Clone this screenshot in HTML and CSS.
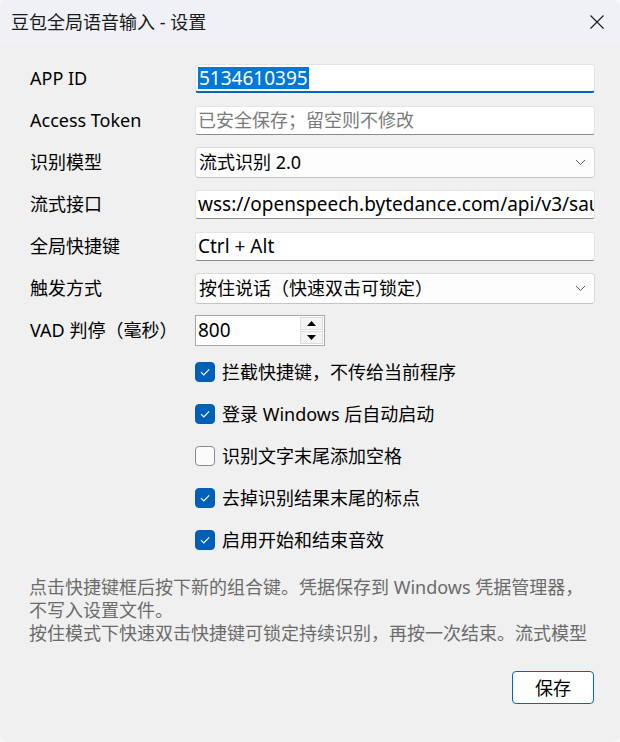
FILE: index.html
```html
<!DOCTYPE html>
<html lang="zh-CN">
<head>
<meta charset="utf-8">
<title>豆包全局语音输入 - 设置</title>
<link rel="stylesheet" href="styles.css">
</head>
<body>
<div class="window">
  <header class="titlebar">
    <span class="title">豆包全局语音输入 - 设置</span>
    <button class="close" aria-label="关闭">
      <svg width="16" height="16" viewBox="0 0 16 16"><path d="M1.5 1.5 L14.5 14.5 M14.5 1.5 L1.5 14.5" stroke="#1a1a1a" stroke-width="1.1" fill="none"/></svg>
    </button>
  </header>

  <main class="form">
    <label class="label">APP ID</label>
    <div class="field focused"><span class="selected latin">5134610395</span></div>

    <label class="label">Access Token</label>
    <div class="field"><span class="placeholder">已安全保存；留空则不修改</span></div>

    <label class="label">识别模型</label>
    <div class="select"><span>流式识别 2.0</span>
      <svg class="chev" width="11" height="7" viewBox="0 0 11 7"><path d="M1 1 L5.5 5.5 L10 1" stroke="#5c5c5c" stroke-width="1" fill="none"/></svg>
    </div>

    <label class="label">流式接口</label>
    <div class="field"><span class="latin">wss://openspeech.bytedance.com/api/v3/sauc/bigmodel_async</span></div>

    <label class="label">全局快捷键</label>
    <div class="field"><span class="latin">Ctrl + Alt</span></div>

    <label class="label">触发方式</label>
    <div class="select"><span>按住说话（快速双击可锁定）</span>
      <svg class="chev" width="11" height="7" viewBox="0 0 11 7"><path d="M1 1 L5.5 5.5 L10 1" stroke="#5c5c5c" stroke-width="1" fill="none"/></svg>
    </div>

    <label class="label">VAD 判停（毫秒）</label>
    <div class="spin-row">
      <div class="spin">
        <span class="spin-value latin">800</span>
        <div class="spin-buttons">
          <span class="spin-btn"><svg width="9" height="5" viewBox="0 0 9 5"><path d="M4.5 0 L9 5 L0 5 Z" fill="#000"/></svg></span>
          <span class="spin-btn"><svg width="9" height="5" viewBox="0 0 9 5"><path d="M0 0 L9 0 L4.5 5 Z" fill="#000"/></svg></span>
        </div>
      </div>
    </div>

    <div class="check checked">
      <span class="box"><svg width="20" height="20" viewBox="0 0 20 20"><path d="M6 10.2 L8.8 13 L14.2 7.4" stroke="#fff" stroke-width="1.2" fill="none"/></svg></span>
      <span>拦截快捷键，不传给当前程序</span>
    </div>
    <div class="check checked">
      <span class="box"><svg width="20" height="20" viewBox="0 0 20 20"><path d="M6 10.2 L8.8 13 L14.2 7.4" stroke="#fff" stroke-width="1.2" fill="none"/></svg></span>
      <span>登录 Windows 后自动启动</span>
    </div>
    <div class="check">
      <span class="box"></span>
      <span>识别文字末尾添加空格</span>
    </div>
    <div class="check checked">
      <span class="box"><svg width="20" height="20" viewBox="0 0 20 20"><path d="M6 10.2 L8.8 13 L14.2 7.4" stroke="#fff" stroke-width="1.2" fill="none"/></svg></span>
      <span>去掉识别结果末尾的标点</span>
    </div>
    <div class="check checked">
      <span class="box"><svg width="20" height="20" viewBox="0 0 20 20"><path d="M6 10.2 L8.8 13 L14.2 7.4" stroke="#fff" stroke-width="1.2" fill="none"/></svg></span>
      <span>启用开始和结束音效</span>
    </div>
  </main>

  <p class="note">点击快捷键框后按下新的组合键。凭据保存到 Windows 凭据管理器，<br>不写入设置文件。<br>按住模式下快速双击快捷键可锁定持续识别，再按一次结束。流式模型</p>

  <footer class="footer">
    <button class="save">保存</button>
  </footer>
</div>
</body>
</html>
```

FILE: styles.css
```css
* { box-sizing: border-box; }

html, body {
  margin: 0;
  padding: 0;
  background: #f7f7f7;
}

body {
  font-family: "Noto Sans", "Noto Sans CJK SC", sans-serif;
  font-size: 18px;
  color: #000;
}

.window {
  width: 620px;
  height: 742px;
  border-radius: 8px;
  overflow: hidden;
  background: #f0f0f0;
  display: flex;
  flex-direction: column;
}

.titlebar {
  height: 44px;
  flex: none;
  background: #f0f1f6;
  display: flex;
  align-items: center;
  justify-content: space-between;
  padding: 0 12px 0 11px;
}

.title {
  font-size: 18px;
  line-height: 24px;
  color: #1a1a1a;
}

.close {
  border: 0;
  background: transparent;
  padding: 0;
  width: 24px;
  height: 24px;
  display: flex;
  align-items: center;
  justify-content: center;
  margin-right: -1px;
}

.form {
  display: grid;
  grid-template-columns: 165px 400px;
  grid-auto-rows: 42px;
  align-items: center;
  padding: 13px 0 0 30px;
}

.label {
  line-height: 24px;
  white-space: nowrap;
}

/* Latin values in the edit boxes run a touch wider than the CJK text */
.latin {
  font-size: 19px;
}

.field {
  height: 29px;
  background: #fff;
  border: 1px solid #e4e4e4;
  border-bottom-color: #8c8c8c;
  border-radius: 3px;
  padding: 0 2px;
  display: flex;
  align-items: center;
  white-space: nowrap;
  overflow: hidden;
  line-height: 24px;
}

.field.focused {
  border-bottom: 2px solid #0067c0;
}

.selected {
  background: #0078d7;
  color: #fff;
  line-height: 22px;
  padding: 0 1px 0 1px;
}

.placeholder {
  color: #7a7a7a;
}

.select {
  height: 31px;
  background: #fdfdfd;
  border: 1px solid #d9d9d9;
  border-bottom-color: #c4c4c4;
  border-radius: 4px;
  padding: 0 8px 0 3px;
  display: flex;
  align-items: center;
  justify-content: space-between;
  line-height: 24px;
  white-space: nowrap;
}

.chev { flex: none; }

.spin-row { display: flex; }

.spin {
  width: 130px;
  height: 31px;
  background: #fff;
  border: 1px solid #a8a8a8;
  display: flex;
  align-items: center;
  padding: 0 1px 0 2px;
  line-height: 24px;
}

.spin-value { flex: 1; }

.spin-buttons {
  width: 23px;
  height: 27px;
  display: flex;
  flex-direction: column;
  gap: 1px;
}

.spin-btn {
  flex: 1;
  background: #f4f4f4;
  border: 1px solid #dcdcdc;
  display: flex;
  align-items: center;
  justify-content: center;
}

.check {
  grid-column: 2;
  display: flex;
  align-items: center;
  gap: 7px;
  line-height: 24px;
  white-space: nowrap;
}

.box {
  width: 20px;
  height: 20px;
  flex: none;
  border-radius: 4px;
  border: 1px solid #8a8a8a;
  background: #fbfbfb;
  display: flex;
}

.check.checked .box {
  border-color: #005fb8;
  background: #005fb8;
}

.box svg { margin: -1px; }

.note {
  margin: 15px 0 0 0;
  padding: 0 0 0 29px;
  color: #6b6b6b;
  font-size: 18px;
  line-height: 23px;
  white-space: nowrap;
}

.footer {
  display: flex;
  justify-content: flex-end;
  padding: 26px 26px 0 0;
}

.save {
  width: 82px;
  height: 33px;
  border: 1px solid #0067c0;
  border-radius: 4px;
  background: #fff;
  font-family: inherit;
  font-size: 18px;
  color: #000;
  padding: 0;
  line-height: 24px;
}
```
